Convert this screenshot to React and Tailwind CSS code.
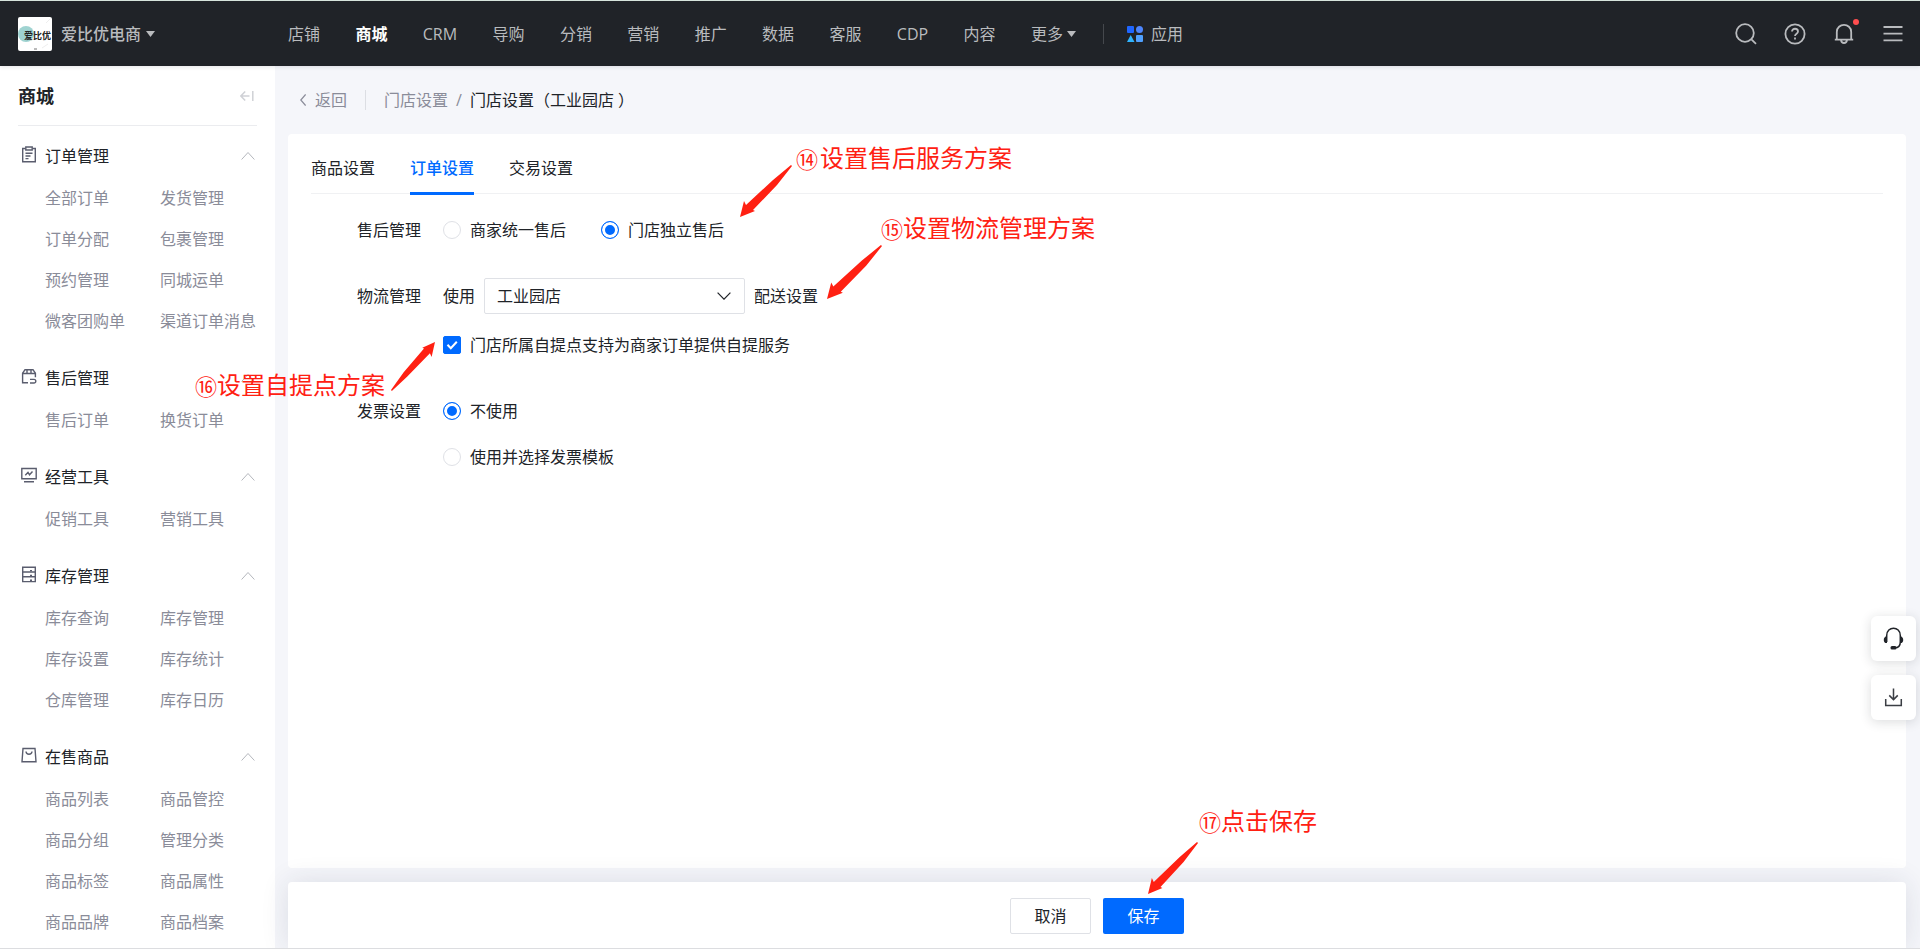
import { useState } from 'react';

const navItems = ['店铺', '商城', 'CRM', '导购', '分销', '营销', '推广', '数据', '客服', 'CDP', '内容'];

const groups = [
  {
    title: '订单管理',
    icon: 'order',
    items: ['全部订单', '发货管理', '订单分配', '包裹管理', '预约管理', '同城运单', '微客团购单', '渠道订单消息'],
  },
  { title: '售后管理', icon: 'refund', items: ['售后订单', '换货订单'] },
  { title: '经营工具', icon: 'tools', items: ['促销工具', '营销工具'] },
  {
    title: '库存管理',
    icon: 'stock',
    items: ['库存查询', '库存管理', '库存设置', '库存统计', '仓库管理', '库存日历'],
  },
  {
    title: '在售商品',
    icon: 'goods',
    items: ['商品列表', '商品管控', '商品分组', '管理分类', '商品标签', '商品属性', '商品品牌', '商品档案'],
  },
];

const tabs = ['商品设置', '订单设置', '交易设置'];

const groupIcons = {
  order: (
    <>
      <path d="M4.5 2.5H1.7v13.3h12.6V2.5h-2.8" />
      <path d="M4.8 1h6.4v3H4.8zM4.5 7.3h7M4.5 10h5M4.5 12.6h3" />
    </>
  ),
  refund: (
    <>
      <path d="M7 14.8H1.6V5.3L4 1.7h8l2.4 3.6v4" />
      <path d="M1.6 5.5h12.8M6 1.7v3.8M10 1.7v3.8M9 11.4h4a1.8 1.8 0 0 1 0 3.6H9" />
    </>
  ),
  tools: (
    <>
      <path d="M.8 1.5h14.4v10.3H.8zM3 14.8h10" />
      <path d="m4.3 8.3 2.7-3 1.5 2.5 3-3.3" />
    </>
  ),
  stock: (
    <>
      <path d="M1.7 1.2h12.6v14.4H1.7zM1.7 6h12.6M1.7 10.8h12.6" />
      <path d="M9 4.6h2M9 9.4h2M9 14.2h2" />
    </>
  ),
  goods: (
    <>
      <path d="M2 1.5h12l1 13.2H1z" />
      <path d="M5 4.5c.3 3.6 5.7 3.6 6 0" />
    </>
  ),
};

function GroupIcon({ name }) {
  return (
    <svg className="mb-0.5 h-[17px] w-4 shrink-0" viewBox="0 0 16 17" fill="none" stroke="#5a5d6e" strokeWidth="1.4">
      {groupIcons[name]}
    </svg>
  );
}

function Caret() {
  return (
    <svg className="h-[6px] w-[9px] shrink-0" viewBox="0 0 9 6" fill="#b9bbbe">
      <path d="M0 0h9L4.5 6z" />
    </svg>
  );
}

function Header() {
  return (
    <header className="relative z-20 flex h-[66px] shrink-0 items-center border-t border-[#d6e4dc] bg-[#202328] text-[#b9bbbe] shadow-[0_1px_4px_rgba(30,40,60,0.12)]">
      <div className="flex w-72 shrink-0 items-center pl-[18px]">
        <svg className="h-[34px] w-[34px] shrink-0" viewBox="0 0 34 34">
          <rect width="34" height="34" rx="2" fill="#fff" />
          <circle cx="8" cy="17" r="8" fill="#9fd3d1" />
          <text x="6" y="22" fontSize="9" fontWeight="700" fill="#222" className="font-['Noto_Sans_CJK_SC',sans-serif]">
            爱比优
          </text>
          <path d="M16 32h3" stroke="#777" />
          <path d="m28 6 4-4M24 31l6-4" stroke="#eee" />
        </svg>
        <button className="ml-[9px] flex items-center gap-[5px] text-base font-medium leading-6">
          爱比优电商
          <Caret />
        </button>
      </div>
      <nav className="flex w-[788px] shrink-0 items-center justify-between text-base leading-6">
        {navItems.map((item) => (
          <a key={item} href="#" className={item === '商城' ? 'font-bold text-white' : 'hover:text-white'}>
            {item}
          </a>
        ))}
        <button className="flex items-center gap-1 hover:text-white">
          更多
          <Caret />
        </button>
      </nav>
      <span className="ml-[27px] h-5 w-px shrink-0 bg-[#45484d]" />
      <a href="#" className="ml-[23px] flex shrink-0 items-center gap-2 text-base leading-6">
        <svg className="h-4 w-4" viewBox="0 0 16 16">
          <rect width="7" height="7" rx="1" fill="#1f66ff" />
          <circle cx="12.5" cy="3.5" r="3.5" fill="#4d86ff" />
          <path d="M3.7 9 7.5 16H0z" fill="#2fb4ff" />
          <rect x="9" y="9" width="7" height="7" rx="1" fill="#4fa0ff" />
        </svg>
        应用
      </a>
      <div className="ml-auto flex items-center gap-[27px] pr-4">
        <button aria-label="搜索">
          <svg className="h-[22px] w-[22px]" viewBox="0 0 22 22" fill="none" stroke="#b9bbbe" strokeWidth="1.8">
            <circle cx="10" cy="10" r="8.8" />
            <path d="m16.4 16.4 4.6 4.4" />
          </svg>
        </button>
        <button aria-label="帮助">
          <svg className="h-[22px] w-[22px]" viewBox="0 0 22 22" fill="none" stroke="#b9bbbe" strokeWidth="1.8">
            <circle cx="11" cy="11" r="9.6" />
            <path d="M8 8.6c0-3.8 6-3.8 6 0 0 2.2-3 2-3 4.4M11 14.4v2" />
          </svg>
        </button>
        <button aria-label="通知" className="relative">
          <svg className="h-[22px] w-[22px]" viewBox="0 0 22 22" fill="none" stroke="#b9bbbe" strokeWidth="1.8">
            <path d="M1.8 16.6h18.4M3.8 16.4V9c0-9.4 14.4-9.4 14.4 0v7.4M8 17c.6 4 5.4 4 6 0" />
          </svg>
          <span className="absolute -right-1 -top-1 h-[6px] w-[6px] rounded-full bg-[#ff4d4f]" />
        </button>
        <button aria-label="菜单">
          <svg className="h-[22px] w-[22px]" viewBox="0 0 22 22" stroke="#b9bbbe" strokeWidth="1.8">
            <path d="M1.5 4h19M1.5 10.7h19M1.5 17.4h19" />
          </svg>
        </button>
      </div>
    </header>
  );
}

function Sidebar() {
  return (
    <aside className="w-[275px] shrink-0 overflow-hidden bg-white">
      <div className="mx-[18px] flex h-[60px] items-center justify-between border-b border-[#ebecef] pr-[3px]">
        <h2 className="text-lg font-bold leading-6 text-[#202328]">商城</h2>
        <button aria-label="收起菜单">
          <svg className="h-3 w-[14px]" viewBox="0 0 14 12" fill="none" stroke="#cfd1d6" strokeWidth="1.5">
            <path d="M9.5 6H1.2M5.2 1.6.9 6l4.3 4.4M12.8 1v10" />
          </svg>
        </button>
      </div>
      <div className="pt-[7px]">
        {groups.map((group) => (
          <section key={group.title} className="mb-[13px]">
            <button className="flex h-[45px] w-full items-center pl-[21px] pr-5 text-base leading-6 text-[#202328]">
              <GroupIcon name={group.icon} />
              <span className="ml-2">{group.title}</span>
              <svg className="ml-auto h-2 w-[14px]" viewBox="0 0 14 8" fill="none" stroke="#b4b7bd">
                <path d="m.6 7.5 6.4-7 6.4 7" />
              </svg>
            </button>
            <div className="grid grid-cols-[115px_115px] pl-[45px]">
              {group.items.map((item) => (
                <a
                  key={item}
                  href="#"
                  className="h-[41px] whitespace-nowrap text-base leading-[41px] text-[#8a8c99] hover:text-[#006aff]"
                >
                  {item}
                </a>
              ))}
            </div>
          </section>
        ))}
      </div>
    </aside>
  );
}

function Radio({ name, value, current, onChange, children }) {
  return (
    <label className="flex items-center gap-[9px] whitespace-nowrap">
      <input
        type="radio"
        name={name}
        value={value}
        checked={current === value}
        onChange={() => onChange(value)}
        className="h-[18px] w-[18px] shrink-0 appearance-none rounded-full border border-[#dfe1e6] bg-white checked:border-[#006aff] checked:bg-[#006aff] checked:shadow-[inset_0_0_0_3px_#fff]"
      />
      {children}
    </label>
  );
}

function Breadcrumb() {
  return (
    <nav className="flex h-[68px] shrink-0 items-center pl-3 text-base leading-6 text-[#8a8c99]">
      <a href="#" className="flex items-center gap-[9px]">
        <svg className="h-3 w-[6px]" viewBox="0 0 6 12" fill="none" stroke="#8a8c99" strokeWidth="1.2">
          <path d="M5.6.5.8 6l4.8 5.5" />
        </svg>
        返回
      </a>
      <span className="mx-[18px] h-5 w-px bg-[#dcdee3]" />
      <a href="#">门店设置</a>
      <span className="mx-2">/</span>
      <span className="text-[#202328]">门店设置（工业园店 ）</span>
    </nav>
  );
}

function SettingsForm() {
  const [afterSale, setAfterSale] = useState('store');
  const [store, setStore] = useState('工业园店');
  const [pickup, setPickup] = useState(true);
  const [invoice, setInvoice] = useState('none');

  return (
    <form className="pl-[46px] text-base leading-6">
      <div className="flex h-[72px] items-center">
        <span className="w-[86px] shrink-0">售后管理</span>
        <div className="flex gap-[35px]">
          <Radio name="afterSale" value="merchant" current={afterSale} onChange={setAfterSale}>
            商家统一售后
          </Radio>
          <Radio name="afterSale" value="store" current={afterSale} onChange={setAfterSale}>
            门店独立售后
          </Radio>
        </div>
      </div>
      <div className="mt-3 flex h-9 items-center">
        <span className="w-[86px] shrink-0">物流管理</span>
        <label htmlFor="store">使用</label>
        <div className="relative ml-[9px]">
          <select
            id="store"
            value={store}
            onChange={(e) => setStore(e.target.value)}
            className="block h-9 w-[261px] appearance-none rounded-xs border border-[#dfe1e6] bg-white pl-3 pr-8 text-base"
          >
            <option>工业园店</option>
          </select>
          <svg
            className="pointer-events-none absolute right-[14px] top-[14px] h-2 w-[14px]"
            viewBox="0 0 14 8"
            fill="none"
            stroke="#202328"
            strokeWidth="1.2"
          >
            <path d="m.6.6 6.4 6.6L13.4.6" />
          </svg>
        </div>
        <span className="ml-[9px] whitespace-nowrap">配送设置</span>
      </div>
      <label className="ml-[86px] mt-[19px] flex h-6 items-center gap-[9px]">
        <span className="grid shrink-0">
          <input
            type="checkbox"
            checked={pickup}
            onChange={(e) => setPickup(e.target.checked)}
            className="col-start-1 row-start-1 h-[18px] w-[18px] appearance-none rounded-xs border border-[#dfe1e6] bg-white checked:border-[#006aff] checked:bg-[#006aff]"
          />
          <svg
            className="pointer-events-none col-start-1 row-start-1 h-[18px] w-[18px]"
            viewBox="0 0 18 18"
            fill="none"
            stroke="#fff"
            strokeWidth="2"
          >
            <path d="m4.5 8.8 3.3 3.4 6-6.4" />
          </svg>
        </span>
        门店所属自提点支持为商家订单提供自提服务
      </label>
      <div className="mt-[42px] flex items-start">
        <span className="w-[86px] shrink-0">发票设置</span>
        <div className="flex flex-col gap-[22px]">
          <Radio name="invoice" value="none" current={invoice} onChange={setInvoice}>
            不使用
          </Radio>
          <Radio name="invoice" value="template" current={invoice} onChange={setInvoice}>
            使用并选择发票模板
          </Radio>
        </div>
      </div>
    </form>
  );
}

function Arrow({ className }) {
  return (
    <svg className={`absolute ${className}`} viewBox="0 0 52 52" preserveAspectRatio="none" fill="#ff2012">
      <path d="M51 0 52 1 37 20 13 45l2 1L0 52 4 36l2 4L33 15z" />
    </svg>
  );
}

function Note({ mark, text, className }) {
  return (
    <div className={`absolute flex items-center whitespace-nowrap text-2xl leading-8 text-[#ff2012] ${className}`}>
      <span className="w-[22px] shrink-0 font-['Noto_Sans_CJK_SC',sans-serif] text-[22px]">{mark}</span>
      {text}
    </div>
  );
}

function Notes() {
  return (
    <div className="pointer-events-none absolute inset-0 z-30">
      <Note mark="⑭" text="设置售后服务方案" className="left-[796px] top-[142px] gap-[2px]" />
      <Arrow className="left-[740px] top-[165px] h-[52px] w-[52px]" />
      <Note mark="⑮" text="设置物流管理方案" className="left-[881px] top-[212px]" />
      <Arrow className="left-[827px] top-[245px] h-[54px] w-[55px]" />
      <Note mark="⑯" text="设置自提点方案" className="left-[195px] top-[369px]" />
      <Arrow className="left-[391px] top-[342px] h-[49px] w-[44px] rotate-180" />
      <Note mark="⑰" text="点击保存" className="left-[1199px] top-[805px]" />
      <Arrow className="left-[1148px] top-[842px] h-[52px] w-[50px]" />
    </div>
  );
}

function FloatingTools() {
  const box =
    'grid h-[45px] w-[45px] place-items-center rounded-md bg-white shadow-[0_2px_12px_rgba(30,35,45,0.16)]';
  return (
    <div className="absolute right-1 top-[616px] z-10 flex flex-col gap-[14px]">
      <button aria-label="客服" className={box}>
        <svg className="h-[23px] w-[21px]" viewBox="0 0 20 23" fill="none" stroke="#202328" strokeWidth="1.5">
          <path d="M3.2 15V8.5C3.2-1.3 16.8-1.3 16.8 8.5V15c0 4-2 5.8-5.5 5.8" />
          <path d="M3.5 9v7C-.8 16.5-.8 9.5 3.5 9zM16.5 9v7c4.3.5 4.3-6.5 0-7z" fill="#202328" stroke="none" />
          <rect x="7" y="19" width="6" height="3.5" rx="1.5" fill="#202328" stroke="none" />
        </svg>
      </button>
      <button aria-label="下载" className={box}>
        <svg className="h-[19px] w-[19px]" viewBox="0 0 18 20" fill="none" stroke="#3b3e44" strokeWidth="1.6">
          <path d="M.8 11.5v7h16.4v-7M9 .5V12M4.5 7.8 9 12.2l4.5-4.4" />
        </svg>
      </button>
    </div>
  );
}

export default function App() {
  const [tab, setTab] = useState('订单设置');

  return (
    <div
      lang="zh-CN"
      className="relative flex h-screen flex-col overflow-hidden border-b border-[#dcdde0] bg-[#f5f6fa] font-['Open_Sans','Noto_Sans_CJK_SC',sans-serif] text-[#202328]"
    >
      <Header />
      <div className="flex min-h-0 flex-1">
        <Sidebar />
        <main className="flex min-w-0 flex-1 flex-col pl-[13px] pr-[14px]">
          <Breadcrumb />
          <div className="min-h-0 flex-1 rounded bg-white px-[23px]">
            <div role="tablist" className="flex h-[60px] gap-[35px] border-b border-[#f0f1f3] pt-[10px]">
              {tabs.map((t) => (
                <button
                  key={t}
                  type="button"
                  role="tab"
                  aria-selected={t === tab}
                  onClick={() => setTab(t)}
                  className={`h-[51px] border-b-[3px] text-base leading-6 ${
                    t === tab ? 'border-[#006aff] font-medium text-[#006aff]' : 'border-transparent'
                  }`}
                >
                  {t}
                </button>
              ))}
            </div>
            <SettingsForm />
          </div>
          <footer className="mt-[14px] flex h-[66px] shrink-0 items-start justify-center gap-3 rounded-t bg-white pt-4 text-base shadow-[0_0_28px_rgba(30,40,70,0.12)]">
            <button className="h-9 w-[81px] rounded-xs border border-[#dfe1e6] bg-white">取消</button>
            <button className="h-9 w-[81px] rounded-xs bg-[#006aff] text-white">保存</button>
          </footer>
        </main>
      </div>
      <FloatingTools />
      <Notes />
    </div>
  );
}
